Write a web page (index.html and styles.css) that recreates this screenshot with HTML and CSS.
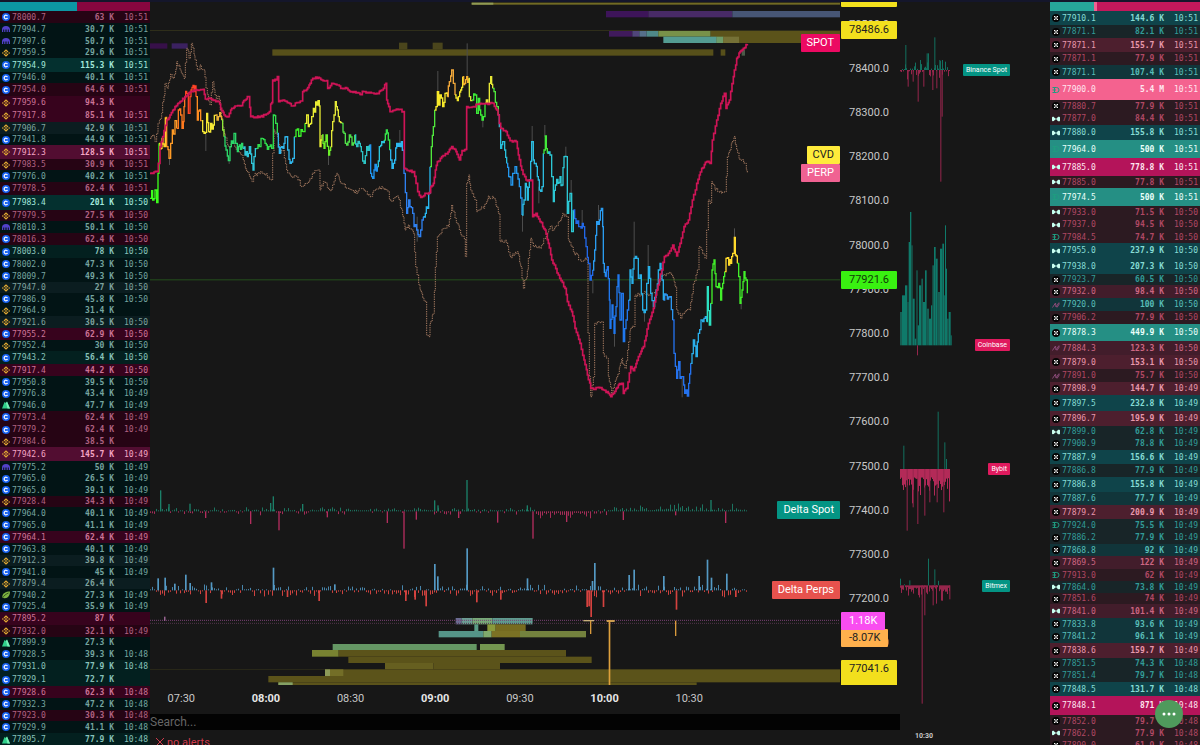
FILE: index.html
```html
<!DOCTYPE html>
<html lang="en">
<head>
    <meta charset="UTF-8">
    <meta name="viewport" content="width=device-width, initial-scale=1.0">
    <title>BTC Order Flow</title>
    <link rel="stylesheet" href="styles.css">
</head>
<body>

    <!-- exchange icons -->
    <svg class="sprite" aria-hidden="true">
        <symbol id="coinbase" viewBox="0 0 16 16">
            <circle cx="8" cy="8" r="8" fill="#1560f0"/>
            <path d="M11 6.2a3.6 3.6 0 1 0 0 3.6" fill="none" stroke="#fff" stroke-width="2.4"/>
        </symbol>
        <symbol id="kraken" viewBox="0 0 16 16">
            <path d="M0 14V9a8 7 0 0 1 16 0v5h-2.400V9h-2v5H9.200V9H6.800v5H4.400V9h-2v5z" fill="#5241c8"/>
        </symbol>
        <symbol id="binance" viewBox="0 0 16 16">
            <path d="M4 6l4-4 4 4M4 10l4 4 4-4" fill="none" stroke="#e0a832" stroke-width="2.400"/>
            <path d="M8 5.800L10.200 8 8 10.200 5.800 8zM1.800 6.200L3.600 8 1.800 9.800 0 8zM14.200 6.200L16 8l-1.800 1.800L12.400 8z" fill="#e0a832"/>
        </symbol>
        <symbol id="bitstamp" viewBox="0 0 16 16">
            <path d="M0 15L5 2l3 2 2-3 6 14z" fill="#2fd08a"/>
            <path d="M8 4l2-3 6 14h-5z" fill="#7af0b8"/>
        </symbol>
        <symbol id="bitfinex" viewBox="0 0 16 16">
            <path d="M1 14C-1 6 6 1 16 1c0 9-5 15-13 13z" fill="#7cb342"/>
            <path d="M1 14c3-5 7-8 12-10" fill="none" stroke="#1c3a10" stroke-width="1.500"/>
        </symbol>
        <symbol id="okx" viewBox="0 0 16 16">
            <circle cx="8" cy="8" r="8" fill="#050505"/>
            <path d="M4 4h2.700v2.700H4zM9.300 4H12v2.700H9.300zM6.700 6.700h2.600v2.600H6.700zM4 9.300h2.700V12H4zM9.300 9.300H12V12H9.300z" fill="#fff"/>
        </symbol>
        <symbol id="hyper" viewBox="0 0 16 16">
            <path d="M0 5c0-2 5-2 5 1h1v1h4c0-4 6-5 6-2v6c0 3-6 2-6-2H6v1H5c0 3-5 3-5 1z" fill="#c8fff0"/>
        </symbol>
        <symbol id="deribit" viewBox="0 0 16 16">
            <path d="M1 3h8a5 5 0 0 1 0 10H1M1 8h7M5 3v10" fill="none" stroke="#1f9c80" stroke-width="2"/>
        </symbol>
        <symbol id="bitmex" viewBox="0 0 16 16">
            <path d="M1 13L7 4l1 8 6-9M10 13l5-8" fill="none" stroke="#8b4a78" stroke-width="2"/>
        </symbol>
    </svg>

    <main class="layout">
        <section class="feed feed-spot" aria-label="Spot trades">
            <div class="balance"><span class="buys"></span><span class="sells"></span></div>
            <table><tbody id="spotTrades"></tbody></table>
        </section>

        <section class="main">
            <div class="chart">
                <div class="plot">
                    <svg id="priceChart" viewBox="0 6 2070 2049" preserveAspectRatio="none" role="img" aria-label="Price chart"></svg>
                    <div class="series-tags" id="seriesTags"></div>
                </div>
                <div class="price-axis">
                    <div class="ticks" id="priceTicks"></div>
                    <div id="priceTags"></div>
                </div>
            </div>
            <div class="time-axis">
                <div class="times">
                    <span>07:30</span>
                    <b>08:00</b>
                    <span>08:30</span>
                    <b>09:00</b>
                    <span>09:30</span>
                    <b>10:00</b>
                    <span>10:30</span>
                </div>
            </div>
            <input class="search" type="text" placeholder="Search..." aria-label="Search">
            <div class="alerts">
                <svg viewBox="0 0 8 8"><path d="M0 0l8 8M8 0L0 8"/></svg>
                <span>no alerts</span>
            </div>
        </section>

        <section class="side">
            <div class="side-plot">
                <svg id="sideChart" viewBox="0 6 450 2178" preserveAspectRatio="none" role="img" aria-label="Delta by exchange"></svg>
                <div class="series-tags" id="sideTags"></div>
            </div>
            <div class="side-time">10:30</div>
        </section>

        <section class="feed feed-perp" aria-label="Perp trades">
            <div class="balance"><span class="buys"></span><span class="both"></span><span class="sells"></span></div>
            <table><tbody id="perpTrades"></tbody></table>
        </section>
    </main>

    <button class="fab" type="button" aria-label="Menu">
        <svg viewBox="0 0 14 4"><circle cx="2" cy="2" r="1.500"/><circle cx="7" cy="2" r="1.500"/><circle cx="12" cy="2" r="1.500"/></svg>
    </button>

    <script src="app.js"></script>
</body>
</html>
```

FILE: styles.css
```css
* {
    box-sizing: border-box;
}
body {
    margin: 0;
    background-color: #171717;
    color: #c8c8c8;
    font-family: "Roboto", sans-serif;
    font-size: 11px;
}
.sprite {
    display: none;
}
.layout {
    display: grid;
    grid-template-columns: 1fr 5fr 1fr 1fr;
    grid-template-rows: minmax(0, 1fr);
    height: 100vh;
    overflow: hidden;
    border-top: 2px solid #14162b;
}

/* trade feeds */
.feed {
    overflow: hidden;
    font-family: "DejaVu Sans Mono", monospace;
    font-size: 8px;
    line-height: 10px;
}
.balance {
    display: flex;
    height: 9px;
}
.balance .sells {
    flex: 1;
}
.feed-spot .buys {
    width: 51%;
    background-color: #0c97a4;
}
.feed-spot .sells {
    background-color: #87063f;
}
.feed-perp .buys {
    width: 29%;
    background-color: #26a69a;
}
.feed-perp .both {
    width: 2%;
    background-color: #f06292;
}
.feed-perp .sells {
    background-color: #c2185b;
}
.feed table {
    width: 100%;
    table-layout: fixed;
    border-collapse: collapse;
}
.feed td {
    padding: 1px 0 0;
    white-space: nowrap;
}
.feed td:nth-child(1) {
    width: 12px;
    padding: 0 0 0 2px;
}
.feed td:nth-child(3) {
    width: 56px;
    text-align: right;
    font-weight: bold;
}
.feed td:nth-child(4) {
    width: 36px;
    padding-right: 2px;
    text-align: right;
}
.feed td svg {
    display: block;
    width: 8px;
    height: 8px;
}
.h11 { height: 11px; }
.h12 { height: 12px; }
.h13 { height: 13px; }
.h14 { height: 14px; }
.h15 { height: 15px; }
.h16 { height: 16px; }
.h17 { height: 17px; }
.h18 { height: 18px; }
.h19 { height: 19px; }
.h21 { height: 21px; }

.feed-spot .b0 { background-color: #021415; color: #76a5a0; }
.feed-spot .b1 { background-color: #03201f; color: #88c2ba; }
.feed-spot .b2 { background-color: #04302f; color: #a2e8dc; }
.feed-spot .bg { background-color: #0b1d20; color: #7fa39f; }
.feed-spot .s0 { background-color: #260414; color: #b06282; }
.feed-spot .s1 { background-color: #37031d; color: #cc7497; }
.feed-spot .s2 { background-color: #520d31; color: #f5a5c5; }
.feed-perp .b0 { background-color: #182528; color: #329c98; }
.feed-perp .b1 { background-color: #11353a; color: #58bdb8; }
.feed-perp .b2 { background-color: #0f444a; color: #86dcd5; }
.feed-perp .b3 { background-color: #258f84; color: #eafffa; }
.feed-perp .s0 { background-color: #2c1a21; color: #b04864; }
.feed-perp .s1 { background-color: #421d2b; color: #cd6682; }
.feed-perp .s2 { background-color: #4d1f2e; color: #e898ac; }
.feed-perp .s3 { background-color: #b4145a; color: #ffe6f0; }
.feed-perp .s4 { background-color: #f4628f; color: #ffe6f0; }

/* main chart */
.main {
    display: flex;
    flex-direction: column;
    min-width: 0;
}
.chart {
    flex: 1;
    display: grid;
    grid-template-columns: 92fr 8fr;
    grid-template-rows: minmax(0, 1fr);
    min-height: 0;
}
.plot,
.price-axis,
.side-plot {
    position: relative;
    min-height: 0;
}
.plot svg,
.side-plot svg {
    display: block;
    width: 100%;
    height: 100%;
}
.price-axis {
    overflow: hidden;
}
.ticks {
    display: flex;
    flex-direction: column;
    height: 100%;
    padding-left: 9px;
}
.ticks span {
    flex: 1;
    display: flex;
    align-items: center;
}
.ticks span:last-child {
    flex: 0 0 20px;
    align-items: flex-start;
    padding-top: 15px;
    overflow: hidden;
}
.tag {
    position: absolute;
    height: 18px;
    line-height: 18px;
    padding: 0 6px;
    border-radius: 1px;
    color: #fff;
}
.series-tags .tag {
    right: 0;
}
.price-axis .tag {
    left: 1px;
    padding: 0 8px;
}
.tag.crimson { background-color: #ec0a62; }
.tag.lemon { background-color: #ffeb3b; color: #222; }
.tag.pink { background-color: #f06292; }
.tag.teal { background-color: #049484; }
.tag.red { background-color: #e7524d; }
.tag.yellow { background-color: #f2df1d; color: #222; }
.tag.green { background-color: #39f011; color: #113a08; }
.tag.magenta { background-color: #f94df0; }
.tag.orange { background-color: #ffb04d; color: #222; }
.tag.tall { height: 26px; }

.time-axis {
    flex: none;
    height: 29px;
    overflow: hidden;
}
.times {
    display: grid;
    grid-template-columns: repeat(7, 1fr);
    width: 79%;
    margin-left: -11px;
    line-height: 28px;
    text-align: center;
}
.times b {
    color: #e6e6e6;
}
.search {
    flex: none;
    width: 100%;
    height: 16px;
    padding: 0;
    border: 0;
    background-color: #030303;
    color: #c8c8c8;
    font-family: "Roboto", sans-serif;
    font-size: 12px;
}
.search::placeholder {
    color: #666;
}
.alerts {
    flex: none;
    display: flex;
    align-items: center;
    gap: 3px;
    height: 15px;
    padding: 9px 0 0 6px;
    color: #d03a4c;
}
.alerts svg {
    width: 8px;
    height: 8px;
    fill: none;
    stroke: #d03a4c;
}

/* delta by exchange */
.side {
    display: flex;
    flex-direction: column;
    min-width: 0;
}
.side-plot {
    flex: 1;
}
.side .tag {
    right: 40px;
    height: 12px;
    padding: 0 3px;
    line-height: 12px;
    font-size: 7px;
}
.side .tag.crimson {
    background-color: #e01a5e;
}
.side-time {
    height: 17px;
    padding-left: 15px;
    font-size: 7px;
    font-weight: bold;
    line-height: 16px;
}
.fab {
    position: fixed;
    right: 17px;
    bottom: 17px;
    display: flex;
    align-items: center;
    justify-content: center;
    width: 28px;
    height: 28px;
    padding: 0;
    border: 0;
    border-radius: 50%;
    background-color: #4f9a5c;
    cursor: pointer;
}
.fab svg {
    width: 14px;
    height: 4px;
    fill: #fff;
}
```

FILE: app.js
```js
// icon, tone, price, size, unit, time, row height
const spotTrades = `
coinbase s0 78000.7 63 K 10:51 12
kraken b0 77994.7 30.7 K 10:51 12
kraken b0 77997.6 50.7 K 10:51 12
binance b0 77959.5 29.6 K 10:51 11
coinbase b2 77954.9 115.3 K 10:51 14
coinbase b0 77946.0 40.1 K 10:51 11
coinbase s0 77954.0 64.6 K 10:51 13
binance s1 77959.6 94.3 K - 13
binance s1 77917.8 85.1 K 10:51 13
binance bg 77906.7 42.9 K 10:51 12
coinbase b0 77941.8 44.9 K 10:51 11
binance s2 77912.3 128.5 K 10:51 14
binance s0 77983.5 30.9 K 10:51 11
coinbase b0 77976.0 40.2 K 10:51 12
coinbase s0 77978.5 62.4 K 10:51 13
coinbase b2 77983.4 201 K 10:50 15
binance s0 77979.5 27.5 K 10:50 11
kraken b0 78010.3 50.1 K 10:50 12
coinbase s0 78016.3 62.4 K 10:50 12
coinbase b1 78003.0 78 K 10:50 13
coinbase b0 78002.0 47.3 K 10:50 12
coinbase b0 78009.7 49.3 K 10:50 12
binance bg 77947.0 27 K 10:50 11
coinbase b0 77986.9 45.8 K 10:50 12
binance b0 77964.9 31.4 K - 11
binance bg 77921.6 30.5 K 10:50 12
coinbase s1 77955.2 62.9 K 10:50 12
binance b0 77952.4 30 K 10:50 11
coinbase b1 77943.2 56.4 K 10:50 13
binance s1 77917.4 44.2 K 10:50 12
coinbase b0 77950.8 39.5 K 10:50 12
coinbase b0 77976.8 43.4 K 10:49 11
bitstamp b0 77946.0 47.7 K 10:49 12
coinbase s0 77973.4 62.4 K 10:49 12
coinbase s0 77979.2 62.4 K 10:49 13
binance s0 77984.6 38.5 K - 11
binance s2 77942.6 145.7 K 10:49 14
kraken b0 77975.2 50 K 10:49 12
coinbase b0 77965.0 26.5 K 10:49 11
coinbase b0 77965.0 39.1 K 10:49 12
binance s0 77928.4 34.3 K 10:49 11
coinbase b0 77964.0 40.1 K 10:49 12
coinbase b0 77965.0 41.1 K 10:49 12
coinbase s1 77964.1 62.4 K 10:49 12
coinbase b0 77963.8 40.1 K 10:49 12
binance bg 77912.3 39.8 K 10:49 11
coinbase b0 77941.0 45 K 10:49 12
binance bg 77879.4 26.4 K - 11
bitfinex b0 77940.2 27.3 K 10:49 12
coinbase b0 77925.4 35.9 K 10:49 11
binance s1 77895.2 87 K - 13
binance s0 77932.0 32.1 K 10:49 12
bitstamp b0 77899.9 27.3 K - 11
coinbase b0 77928.5 39.3 K 10:48 12
coinbase b1 77931.0 77.9 K 10:48 13
coinbase b1 77929.1 72.7 K - 13
coinbase s1 77928.6 62.3 K 10:48 12
coinbase b0 77932.3 47.2 K 10:48 12
coinbase s0 77923.0 30.3 K 10:48 11
coinbase b0 77929.9 41.1 K 10:48 12
bitstamp b1 77895.7 77.9 K 10:48 13`;

const perpTrades = `
okx b2 77910.1 144.6 K 10:51 14
okx b0 77871.1 82.1 K 10:51 13
okx s2 77871.1 155.7 K 10:51 14
okx s0 77871.1 77.9 K 10:51 13
okx b1 77871.1 107.4 K 10:51 14
deribit s4 77900.0 5.4 M 10:51 21
okx s0 77880.7 77.9 K 10:51 12
hyper s0 77877.0 84.4 K 10:51 13
hyper b2 77880.0 155.8 K 10:51 15
deribit b3 77964.0 500 K 10:51 18
hyper s3 77885.0 778.8 K 10:51 18
hyper s0 77885.0 77.8 K 10:51 12
deribit b3 77974.5 500 K 10:51 18
hyper s0 77933.0 71.5 K 10:50 12
hyper s0 77937.0 94.5 K 10:50 13
deribit s0 77984.5 74.7 K 10:50 12
hyper b2 77955.0 237.9 K 10:50 15
hyper b2 77938.0 207.3 K 10:50 16
okx b0 77923.7 60.5 K 10:50 11
okx s1 77932.0 98.4 K 10:50 13
bitmex b1 77920.0 100 K 10:50 13
okx s0 77906.2 77.9 K 10:50 13
okx b3 77878.3 449.9 K 10:50 17
bitmex s1 77884.3 123.3 K 10:50 14
okx s2 77879.0 153.1 K 10:50 14
bitmex s0 77891.0 75.7 K 10:50 13
okx s2 77898.9 144.7 K 10:49 13
okx b2 77897.5 232.8 K 10:49 16
okx s2 77896.7 195.9 K 10:49 15
hyper b0 77899.0 62.8 K 10:49 11
okx b0 77900.9 78.8 K 10:49 13
okx b2 77887.9 156.6 K 10:49 14
okx b0 77886.8 77.9 K 10:49 13
okx b2 77886.8 155.8 K 10:49 15
okx b1 77887.6 77.7 K 10:49 13
okx s2 77879.2 200.9 K 10:49 14
deribit b0 77924.0 75.5 K 10:49 12
okx b0 77886.2 77.9 K 10:49 13
okx b1 77868.8 92 K 10:49 12
okx s1 77869.5 122 K 10:49 13
deribit s0 77913.0 62 K 10:49 12
hyper b0 77864.0 73.8 K 10:49 12
okx s0 77851.6 74 K 10:49 11
hyper s1 77841.0 101.4 K 10:49 14
okx b1 77833.8 93.6 K 10:49 12
okx b1 77841.2 96.1 K 10:49 13
okx s2 77838.6 159.7 K 10:49 15
okx b0 77851.5 74.3 K 10:48 11
okx b0 77851.4 79.7 K 10:48 13
okx b2 77848.5 131.7 K 10:48 14
okx s3 77848.1 871 K 10:48 19
okx s0 77852.0 79.7 K 10:48 12
hyper s0 77862.0 77.9 K 10:48 12
okx s0 77890.0 61.9 K 10:48 12`;

function renderTrades(id, text) {
    document.getElementById(id).innerHTML = text.trim().split('\n').map(line => {
        const [icon, tone, price, size, unit, time, height] = line.split(' ');
        return `<tr class="${tone} h${height}">
            <td><svg><use href="#${icon}"/></svg></td>
            <td>${price}</td>
            <td>${size} ${unit}</td>
            <td>${time === '-' ? '' : time}</td>
        </tr>`;
    }).join('');
}

renderTrades('spotTrades', spotTrades);
renderTrades('perpTrades', perpTrades);

// Chart units are thirds of a pixel. LATE is where the second half starts.
const LATE = 990;

function parse(points, dx = 0) {
    return points.split(' ').map(p => {
        const [x, y] = p.split(',').map(Number);
        return [x + dx, y];
    });
}

function stepPath(points) {
    return points.map(([x, y], i) => i ? `H${x}V${y}` : `M${x} ${y}`).join('');
}

// same small bars on every load
let seed = 7;
function random() {
    seed = (seed * 16807) % 2147483647;
    return seed / 2147483647;
}

// fill in ticks between the points, with a little jitter
function roughen(points, size) {
    const out = [points[0]];
    for (let i = 1; i < points.length; i++) {
        const [x0, y0] = points[i - 1];
        const [x1, y1] = points[i];
        const n = Math.max(1, Math.round((x1 - x0) / 4));
        for (let k = 1; k < n; k++) {
            const y = y0 + (y1 - y0) * k / n + (random() - 0.5) * size;
            out.push([Math.round(x0 + (x1 - x0) * k / n), Math.round(y)]);
        }
        out.push([x1, y1]);
    }
    return out;
}

// liquidity heatmap: x, y, width, height, color
const bands = [
    [965, 8, 1105, 6, '#716a24'], [965, 8, 65, 6, '#8f9a55'],
    [0, 130, 52, 16, '#371049'], [65, 130, 48, 16, '#3b2160'],
    [367, 148, 1323, 19, '#57501a'], [747, 128, 25, 20, '#4a451c'], [848, 128, 30, 20, '#4a451c'],
    [1712, 148, 14, 19, '#57501a'], [1775, 148, 10, 19, '#4a5a48'],
    [1368, 33, 127, 19, '#3d1459'], [1495, 33, 252, 19, '#482a66'], [1747, 33, 323, 19, '#475675'],
    [1377, 90, 70, 20, '#401a5c'], [1447, 90, 21, 20, '#50457a'], [1468, 90, 22, 20, '#566f8a'],
    [1490, 90, 35, 20, '#4f8988'], [1525, 90, 157, 20, '#789249'], [1682, 90, 388, 39, '#5b531a'],
    [1540, 110, 160, 19, '#549c92'], [1700, 110, 20, 19, '#6c9c68'], [1720, 110, 47, 19, '#757136'],
    [917, 1854, 18, 19, '#6b6c92'], [935, 1854, 32, 19, '#6c9d93'], [967, 1854, 60, 19, '#77a878'], [1027, 1854, 121, 19, '#5f9a8e'],
    [973, 1873, 12, 20, '#5a9c86'], [1012, 1873, 25, 20, '#8a9a3c'], [1037, 1873, 90, 20, '#766b20'],
    [866, 1893, 134, 19, '#559488'], [1000, 1893, 25, 19, '#7fa96c'], [1025, 1893, 85, 19, '#7b7124'], [1110, 1893, 198, 19, '#74823e'],
    [548, 1932, 432, 18, '#659764'], [990, 1932, 74, 18, '#749650'],
    [486, 1950, 80, 20, '#788231'], [566, 1950, 682, 20, '#5b531a'],
    [595, 1970, 730, 19, '#5b531a'],
    [705, 1989, 145, 19, '#665f20'], [850, 1989, 200, 19, '#5b531a'],
    [525, 2008, 1545, 20, '#5b531a'], [525, 2008, 15, 20, '#8d9b58'], [540, 2008, 40, 20, '#736e27'],
    [355, 2028, 1715, 19, '#5b531a'],
    [385, 2047, 1255, 8, '#5b531a'], [385, 2047, 43, 8, '#85a164']
];

const wicks = [
    [862, 213, 280], [950, 130, 230], [166, 395, 453], [236, 470, 492], [534, 460, 495], [997, 350, 382], [57, 470, 495],
    [748, 390, 430], [800, 650, 725], [1145, 378, 430], [1183, 375, 410], [1116, 645, 695], [1246, 440, 470],
    [1262, 540, 600], [1295, 630, 680], [1451, 665, 775], [1493, 735, 800], [1595, 1130, 1192], [1752, 685, 712],
    [1392, 1000, 1040], [1344, 615, 660], [1772, 905, 928], [1482, 930, 965], [1327, 840, 880], [1165, 560, 610]
];

const price = [
    [0, '#3cff1c', '0,595 5,572 8,600 15,570 20,608 24,520 27,430'],
    [0, '#ffcf2a', '27,430 33,445 36,415 42,440 46,352'],
    [0, '#ff9b26', '46,352 50,440 57,475 62,430 67,390 70,402 75,362 80,385'],
    [0, '#ff7a1f', '80,385 85,330 92,345 96,385 100,365 102,320 104,290'],
    [0, '#ff4326', '104,290 110,280 115,340 120,290 126,262 132,275 136,258 138,290'],
    [0, '#ff8d22', '138,290 142,360 148,330 152,362 155,362'],
    [0, '#f4e735', '155,362 158,395 166,397 170,340 176,395 182,370 190,375 196,345'],
    [0, '#e8b036', '196,345 205,350 212,350 215,360'],
    [0, '#8fe93a', '215,360 218,390 222,410'],
    [0, '#2bd668', '222,410 228,450 235,482 240,440 248,430 252,400 257,430 262,455 268,435 278,445'],
    [0, '#30c6da', '278,445 285,465 292,470 298,440 305,490 309,510 312,470 320,445'],
    [0, '#2fdc4c', '320,445 328,440 333,415 345,430 356,440 365,445 370,345 377,370 382,400'],
    [0, '#31b7ec', '382,400 388,460 395,440 402,430 408,410 413,450 420,490 428,475 433,410'],
    [0, '#3bf02a', '433,410 438,390 450,408 460,395 465,370'],
    [0, '#e9ec33', '465,370 470,345 475,380 485,350 490,325 500,315 508,318 510,440 516,405'],
    [0, '#6cf02a', '516,405 522,445 528,405 536,465 542,440'],
    [0, '#e4e838', '542,440 548,365 556,305 562,330 568,365 575,370'],
    [0, '#4fe048', '575,370 582,400 590,435 598,405 606,435 614,405'],
    [0, '#2cc4c4', '614,405 620,440 628,430 634,455 642,490 650,440 658,435'],
    [0, '#2196f0', '658,435 662,520 668,535 672,510 682,500'],
    [0, '#2cc4dc', '682,500 688,440 695,425 703,420'],
    [0, '#36e24a', '703,420 709,390 715,420 719,450'],
    [0, '#2cb8ee', '719,450 722,480 726,505 734,480 740,430 748,430 754,425 760,450'],
    [0, '#2f80f0', '760,450 762,520 770,640 776,600 780,620 788,640 792,680 800,690 807,710 812,690 820,650'],
    [0, '#28b6ee', '820,650 826,640 832,625 836,580 840,500'],
    [0, '#4fe83c', '840,500 844,440 850,380 854,330'],
    [0, '#f8e92a', '854,330 858,320 862,275 866,315 870,285 878,320 885,280 892,290'],
    [0, '#f2a83a', '892,290 898,245 905,210 910,250 915,285'],
    [0, '#f2e62c', '915,285 925,290 932,270 938,230'],
    [0, '#f5ad2e', '938,230 944,250 950,230 956,235'],
    [0, '#d8e83a', '956,235 958,290 966,300'],
    [0, '#3cec38', '966,300 975,285 980,340 985,295 992,345 1000,350 1005,310'],
    [0, '#e8e836', '1005,310 1013,310 1018,250 1022,230 1028,265'],
    [0, '#4fe83c', '1028,265 1032,275 1040,320 1045,345'],
    [LATE, '#28c0dc', '55,345 58,380 62,445 68,425 74,450 80,490'],
    [LATE, '#2498ee', '80,490 86,530 93,555 98,520 105,500 110,520 118,560 126,645'],
    [LATE, '#2cbce0', '126,645 132,600 136,550 142,600 148,540 155,425 160,480 166,490 172,530 178,570 186,560 190,460'],
    [LATE, '#42e83a', '190,460 192,450 196,408 202,460'],
    [LATE, '#2cc8d4', '202,460 210,465 215,530 220,605 226,555 234,550 240,530 246,555 252,470 258,470 262,640 270,580 275,695 280,630'],
    [LATE, '#2268e8', '280,630 288,670 300,680 310,680 318,740 325,790 330,840 338,810'],
    [LATE, '#2a9cf0', '338,810 344,750 350,665 358,660 364,625 368,680 370,790 376,830'],
    [LATE, '#2078ee', '376,830 382,800 388,900 390,985 396,915 402,1000 408,920 414,825 420,960 425,880 430,1025 438,960 446,900'],
    [LATE, '#28b0e8', '446,900 450,810 456,850 462,775 470,775 475,835 480,825 488,930 496,930 500,850 505,800 512,880 520,920 528,870 535,810 540,790 546,840 550,900'],
    [LATE, '#2c96f0', '550,900 558,885 570,890 578,960'],
    [LATE, '#2472ee', '578,960 582,1060 590,1135 596,1085 600,1135 608,1130 614,1180 622,1188 626,1150 632,1090'],
    [LATE, '#2aaeea', '632,1090 640,1020 648,1070 655,1000 663,960 672,955 680,965'],
    [LATE, '#2ce0c0', '680,965 682,860 688,975 692,910'],
    [LATE, '#42f02a', '692,910 696,810 702,780 708,860 716,850 722,900 728,850 734,815'],
    [LATE, '#ffd92c', '734,815 738,775 746,795 752,790 758,760 763,712 766,765 772,790'],
    [LATE, '#42f02a', '772,790 776,830 780,910 786,870 792,815 798,840 802,880']
];

const spotCvd = parse('0,520 20,515 25,490 30,440 38,410 50,360 60,345 75,320 90,305 105,290 125,275 140,270 160,268 166,297 185,298 205,305 212,325 222,345 235,350 245,325 255,318 270,318 285,300 296,290 302,350 312,353 330,350 345,345 358,335 362,312 368,300 368,240 378,240 382,230 386,305 400,300 412,308 428,318 440,308 455,303 458,275 470,268 480,250 488,235 505,232 515,240 530,242 533,265 545,250 565,255 575,265 590,265 605,275 630,283 640,275 660,277 680,280 695,270 700,265 708,250 710,300 716,320 720,335 735,330 748,328 760,335 763,505 775,512 790,515 798,550 803,575 812,592 825,580 838,578 842,560 850,550 856,510 862,485 875,470 890,462 905,440 918,455 928,480 936,452 948,448 950,320 970,320 990,310 1010,310')
    .concat(parse('40,310 50,330 62,385 78,395 90,422 108,425 115,465 125,510 138,540 155,540 158,650 168,640 180,665 195,690 205,730 215,780 235,825 255,865 262,905 275,935 285,985 300,1030 312,1080 322,1125 332,1165 345,1168 355,1162 370,1170 382,1175 392,1190 400,1180 415,1155 425,1150 430,1180 440,1165 452,1100 460,1112 475,1070 490,1040 505,970 520,925 530,870 545,810 553,770 565,760 578,735 590,768 600,730 612,680 625,660 637,600 650,550 665,505 680,485 690,490 697,420 710,360 722,310 733,280 738,325 748,300 760,230 770,175 780,155 790,145 802,132', LATE));

const perpCvd = parse('0,415 8,405 15,425 24,370 35,340 45,250 52,265 62,222 70,235 80,185 90,210 102,235 110,145 117,175 124,130 132,165 142,210 150,195 162,210 168,265 180,315 188,245 195,285 208,300 214,355 222,400 235,440 250,430 265,455 275,465 290,515 306,545 315,520 340,520 363,540 368,460 372,390 382,410 390,460 400,450 410,510 420,525 440,530 455,560 468,550 480,535 490,520 505,510 510,570 520,545 540,572 560,520 575,550 590,565 605,570 620,580 635,565 660,590 675,570 695,560 710,570 722,603 742,588 755,630 765,690 775,675 790,700 797,800 810,870 826,905 830,1005 836,1010 840,970 850,940 856,800 862,710 880,685 895,680 905,615 915,655 928,690 942,715 946,770 950,550 956,525 962,570 975,600 980,635 995,620')
    .concat(parse('10,625 25,588 45,600 55,640 60,725 75,720 90,770 112,755 122,800 130,865 142,810 152,715 160,740 180,745 195,715 210,680 220,690 235,665 248,640 260,650 265,720 280,755 300,780 320,780 324,1000 328,1130 332,1190 340,1130 344,970 365,965 370,1060 380,1075 385,1130 395,1180 410,1130 425,1075 435,1105 450,990 460,980 465,885 490,880 510,880 530,870 545,830 560,820 575,825 585,860 590,930 602,955 615,935 628,930 640,850 652,810 657,740 675,775 680,690 685,600 690,610 695,545 705,570 725,580 735,575 742,470 762,410 770,450 780,480 795,490 802,518', LATE));

const deltaSpot = [
    [30, 63], [55, 22], [118, 23], [165, -20], [300, -38], [360, 25], [368, 45], [385, -57], [456, 22], [530, -18],
    [710, -35], [760, -112], [797, -25], [852, 33], [862, 18], [924, -20], [949, 94], [1041, -34], [1130, 18],
    [1147, -82], [1248, -32], [1418, -26], [1575, -12], [1681, 34], [1725, -35]
];
const deltaPerps = [
    [22, 36], [43, 38], [72, 20], [105, 47], [118, 22], [166, -38], [182, 24], [212, -25], [368, 68], [410, -20],
    [505, -32], [552, 18], [765, -32], [793, -28], [826, -48], [852, 79], [861, 42], [949, 126], [978, -36],
    [1050, -28], [1130, 36], [1309, -50], [1315, -48], [1321, -80], [1325, 28], [1332, 82], [1358, -50], [1435, 46],
    [1450, 62], [1539, 43], [1577, -58], [1645, 43], [1670, 92], [1682, 38], [1728, 50], [1755, -20]
];

function rect(x, y, w, h, color) {
    return `<rect x="${x}" y="${y}" width="${w}" height="${h}" fill="${color}"/>`;
}

function bar(x, base, value, up, down, w = 3) {
    return value >= 0 ? rect(x, base - value, w, value, up) : rect(x, base, w, -value, down);
}

// background noise of a delta histogram, range(x) gives [min, max]
function noise(from, to, step, base, range, up, down) {
    let out = '';
    for (let x = from; x < to; x += step) {
        const [min, max] = range(x);
        const value = min + (max - min) * random() * random();
        out += bar(x, base, Math.abs(value) < 3 ? 3 : value, up, down);
    }
    return out;
}

function spotRange(x) {
    if (x > 1160 && x < 1325) return [-4, -28];
    if (x > 1390) return [2, 26];
    return random() > 0.4 ? [2, 14] : [-2, -12];
}

function perpRange() {
    return random() > 0.5 ? [2, 20] : [-3, -24];
}

let chart = bands.map(b => rect(...b)).join('');
chart += rect(0, 90, 2070, 3, '#2f2e1a') + rect(0, 838, 2070, 3, '#24501d') + rect(0, 2007, 525, 3, '#282718');
chart += '<path d="M0 1861H2070" stroke="#7a4275" stroke-width="3" stroke-dasharray="3 3"/>';
chart += '<path d="M0 1870H2070" stroke="#54364c" stroke-width="3" stroke-dasharray="3 3"/>';
chart += noise(0, 1792, 6, 1534, spotRange, '#1c7460', '#a52d58');
chart += deltaSpot.map(([x, v]) => bar(x, 1534, v, '#1b8069', '#b32e5e', 4)).join('');
chart += noise(0, 1792, 6, 1771, perpRange, '#4785ab', '#cf4340');
chart += deltaPerps.map(([x, v]) => bar(x, 1771, v, '#5499c4', '#d5423f', 5)).join('');
chart += rect(43, 1850, 3, 12, '#d58acb') + rect(1300, 1860, 32, 4, '#c9b07c') + rect(1370, 1860, 24, 6, '#c99c50');
chart += rect(1320, 1862, 4, 40, '#d99a3c') + rect(1376, 1862, 5, 193, '#dda03c') + rect(1575, 1862, 4, 46, '#d99a3c');
chart += wicks.map(([x, y1, y2]) => rect(x, y1, 3, y2 - y1, '#4c4c4c')).join('');
chart += `<path d="${stepPath(roughen(perpCvd, 14))}" fill="none" stroke="#a87c62" stroke-width="3" stroke-dasharray="4 3"/>`;
chart += price.map(([dx, color, points]) =>
    `<path d="${stepPath(roughen(parse(points, dx), 30))}" fill="none" stroke="${color}" stroke-width="4"/>`).join('');
chart += `<path d="${stepPath(roughen(spotCvd, 7))}" fill="none" stroke="#cf1457" stroke-width="5"/>`;
document.getElementById('priceChart').innerHTML = chart;

// price axis
let ticks = '';
for (let p = 78500; p >= 77000; p -= 100) {
    ticks += `<span>${p.toFixed(1)}</span>`;
}
document.getElementById('priceTicks').innerHTML = ticks;

function renderTags(id, height, tags) {
    document.getElementById(id).innerHTML = tags.map(([text, color, y]) =>
        `<span class="tag ${color}" style="top:${(y / height * 100).toFixed(2)}%">${text}</span>`).join('');
}

renderTags('seriesTags', 683, [
    ['SPOT', 'crimson', 32], ['CVD', 'lemon', 144], ['PERP', 'pink', 162],
    ['Delta Spot', 'teal', 499], ['Delta Perps', 'red', 579]
]);
renderTags('priceTags', 683, [
    ['78550.0', 'yellow', -13], ['78486.6', 'yellow', 19], ['77921.6', 'green', 269],
    ['-8.07K', 'orange', 627], ['1.18K', 'magenta', 610], ['77041.6', 'yellow tall', 658]
]);
renderTags('sideTags', 726, [
    ['Binance Spot', 'teal', 62], ['Coinbase', 'crimson', 337], ['Bybit', 'crimson', 461], ['Bitmex', 'teal', 578]
]);

// delta by exchange
const UP = '#12705f';
const DOWN = '#96264c';
const sideSpikes = [
    [210, [[16, 75], [60, 30], [80, 50], [84, 50], [103, 98], [118, 30], [126, 30], [135, 25], [23, -50], [38, -35],
        [53, -95], [70, -50], [97, -60], [109, -55], [121, -335], [125, -140]]],
    [1407, [[10, 70], [113, 172], [133, 80], [138, 30], [20, -185], [38, -115], [52, -165], [73, -140], [88, -100],
        [110, -100], [130, -130]]],
    [1756, [[0, 20], [28, 15], [84, 80], [103, 48], [65, -355], [73, -90], [98, -60], [108, -55], [148, -42]]]
];
const coinbase = parse('0,100 6,150 15,180 22,130 26,310 30,400 34,300 38,140 44,20 49,225 53,60 57,180 64,200 69,130 75,225 80,110 87,80 93,120 97,240 102,295 107,260 113,160 120,290 127,305 132,150 135,360 138,230 141,80 146,100 152,30');

let side = noise(0, 150, 3, 210, () => random() > 0.5 ? [2, 30] : [-3, -30], UP, DOWN);
side += noise(0, 150, 3, 1407, () => [-25, -110], UP, '#b32a58');
side += noise(0, 150, 3, 1756, () => random() > 0.85 ? [2, 20] : [-5, -50], UP, DOWN);
side += sideSpikes.map(([base, spikes]) => spikes.map(([x, v]) => bar(x, base, v, UP, DOWN)).join('')).join('');
coinbase.forEach(([x, v], i) => {
    const next = coinbase[i + 1] ? coinbase[i + 1][0] : x + 3;
    side += bar(x, 1036, v, i % 3 ? '#0f7a6a' : '#175e53', UP, next - x);
});
side += rect(51, 1036, 3, 30, DOWN);
document.getElementById('sideChart').innerHTML = side;
```
